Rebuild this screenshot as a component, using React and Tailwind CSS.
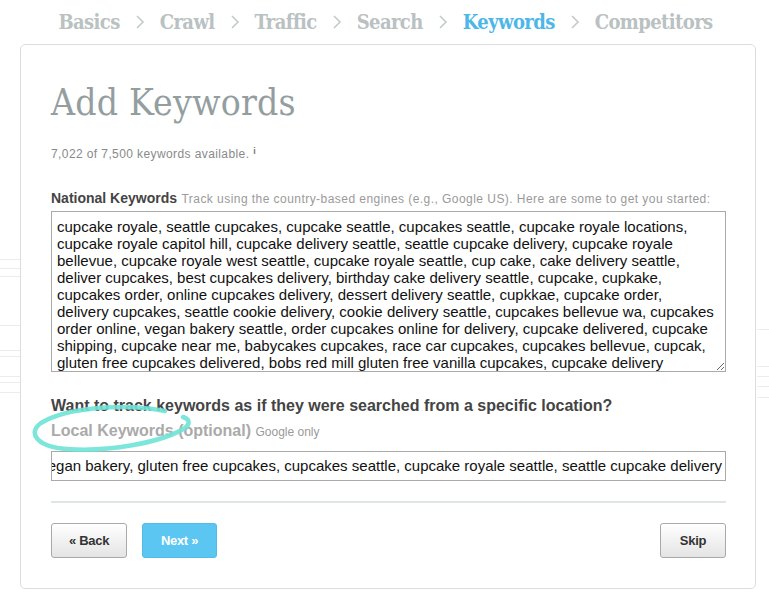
import React from "react";

const steps = ["Basics", "Crawl", "Traffic", "Search", "Keywords", "Competitors"];

const national =
  "cupcake royale, seattle cupcakes, cupcake seattle, cupcakes seattle, cupcake royale locations, cupcake royale capitol hill, cupcake delivery seattle, seattle cupcake delivery, cupcake royale bellevue, cupcake royale west seattle, cupcake royale seattle, cup cake, cake delivery seattle, deliver cupcakes, best cupcakes delivery, birthday cake delivery seattle, cupcake, cupkake, cupcakes order, online cupcakes delivery, dessert delivery seattle, cupkkae, cupcake order, delivery cupcakes, seattle cookie delivery, cookie delivery seattle, cupcakes bellevue wa, cupcakes order online, vegan bakery seattle, order cupcakes online for delivery, cupcake delivered, cupcake shipping, cupcake near me, babycakes cupcakes, race car cupcakes, cupcakes bellevue, cupcak, gluten free cupcakes delivered, bobs red mill gluten free vanilla cupcakes, cupcake delivery service, cupcake royale ballard, cupcake royale menu";

const local =
  "cupcake royale, seattle cupcakes, vegan bakery, gluten free cupcakes, cupcakes seattle, cupcake royale seattle, seattle cupcake delivery";

const Chevron = () => (
  <svg width="10" height="16" viewBox="0 0 10 16" className="mx-[15px]">
    <path d="M2 2 L8 8 L2 14" fill="none" stroke="#c3cacb" strokeWidth="1.6" />
  </svg>
);

// faint rules of the page behind the card, visible at both sides
const leftRules = [259, 268, 276, 325, 350, 356, 376, 382, 392];
const rightRules = [329, 366, 376, 386, 397];

export default function App() {
  return (
    <div className="relative w-[769px] h-[599px] overflow-hidden bg-white font-['Liberation_Sans',Arial,sans-serif]">
      {leftRules.map((t) => (
        <div key={"l" + t} className="absolute left-0 w-[20px] h-px bg-[#ececec]" style={{ top: t }} />
      ))}
      {rightRules.map((t) => (
        <div key={"r" + t} className="absolute right-0 w-[12px] h-px bg-[#ececec]" style={{ top: t }} />
      ))}

      <nav className="flex items-center justify-center h-[44px] pl-[2px] font-['DejaVu_Serif_Condensed','DejaVu_Serif',serif] font-bold text-[20px] tracking-[-0.6px]">
        {steps.map((s, i) => (
          <React.Fragment key={s}>
            {i > 0 && <Chevron />}
            <span className={s === "Keywords" ? "text-[#4db7e8]" : "text-[#b9c1c2]"}>{s}</span>
          </React.Fragment>
        ))}
      </nav>

      <div className="relative mx-[20px] w-[736px] h-[545px] border border-[#dddddd] rounded-[5px] bg-white px-[30px] pt-[36px]">
        <h1 className="font-['DejaVu_Serif_Condensed','DejaVu_Serif',serif] font-light text-[37px] leading-[44px] text-[#949e9f] tracking-[0.2px]">
          Add Keywords
        </h1>
        <p className="mt-[20px] text-[12px] tracking-[0.4px] text-[#8a8a8a]">
          7,022 of 7,500 keywords available. <sup className="text-[9px] font-bold text-[#777]">i</sup>
        </p>

        <div className="mt-[26px] leading-[18px]">
          <span className="text-[14px] font-bold text-[#444]">National Keywords</span>{" "}
          <span className="text-[12px] tracking-[0.45px] text-[#9a9a9a]">
            Track using the country-based engines (e.g., Google US). Here are some to get you started:
          </span>
        </div>
        <textarea
          readOnly
          defaultValue={national}
          className="block mt-[3px] w-[675px] h-[161px] border border-[#aaaaaa] pl-[5px] pr-[9px] pt-[6px] text-[15px] leading-[17px] text-[#111] overflow-hidden resize-y outline-none font-['Liberation_Sans',Arial,sans-serif]"
        />

        <p className="mt-[24px] text-[16px] font-bold text-[#444] leading-[20px]">
          Want to track keywords as if they were searched from a specific location?
        </p>
        <div className="relative mt-[5px] leading-[20px]">
          <span className="text-[16px] font-bold text-[#aaaaaa]">Local Keywords (optional)</span>{" "}
          <span className="text-[12px] text-[#9a9a9a]">Google only</span>
          <svg
            className="absolute left-[-24px] top-[-16px]"
            width="176"
            height="48"
            viewBox="0 0 176 48"
          >
            <path
              d="M138 6 C 100 -2, 40 2, 14 18 C 0 28, 10 42, 40 44 C 80 47, 134 38, 158 23 C 164 18, 162 14, 156 12"
              fill="none"
              stroke="#6fe3d6"
              strokeWidth="4.5"
              strokeLinecap="round"
              opacity="0.9"
            />
          </svg>
        </div>
        <div className="mt-[9px] w-[675px] h-[30px] border border-[#aaaaaa] flex items-center justify-end overflow-hidden whitespace-nowrap pr-[3px] text-[15px] text-[#111]">
          <span>{local}</span>
        </div>

        <div className="mt-[20px] w-[675px] h-[2px] bg-[#dfe4e4]" />

        <div className="mt-[20px] flex items-center w-[675px]">
          <button className="w-[76px] h-[35px] rounded-[3px] border border-[#a9a9a9] bg-gradient-to-b from-white to-[#e4e4e4] text-[13px] font-bold text-[#333] tracking-[-0.3px]">
            « Back
          </button>
          <button className="ml-[15px] w-[75px] h-[35px] rounded-[3px] border border-[#52bbe8] bg-[#5bc6f2] text-[13px] font-bold text-white tracking-[-0.3px]">
            Next »
          </button>
          <button className="ml-auto w-[66px] h-[35px] rounded-[3px] border border-[#a9a9a9] bg-gradient-to-b from-white to-[#e4e4e4] text-[13px] font-bold text-[#333] tracking-[-0.3px]">
            Skip
          </button>
        </div>
      </div>
    </div>
  );
}
